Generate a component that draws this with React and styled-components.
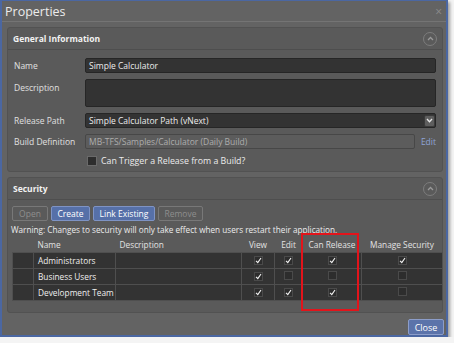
import React from 'react';
import styled, { createGlobalStyle } from 'styled-components';

const GlobalStyle = createGlobalStyle`
  body {
    margin: 0;
    background: #f4f4f4;
    font-family: "Open Sans", "Noto Sans", sans-serif;
  }
`;

const Window = styled.div`
  width: 448px;
  height: 337px;
  box-sizing: border-box;
  border: 2px solid #4b67a2;
  border-top-width: 1px;
  background: #636363;
  box-shadow: 2px 2px 3px rgba(0, 0, 0, 0.35);
  display: flex;
  flex-direction: column;
  color: #e6e6e6;
  font-size: 8.5px;
`;

const TitleBar = styled.div`
  height: 20px;
  padding: 0 4px 0 3px;
  display: flex;
  align-items: center;
  justify-content: space-between;
  border-bottom: 1px solid #747474;
  h1 {
    margin: 0;
    font-size: 12.5px;
    font-weight: 400;
    color: #ececec;
  }
  span {
    color: #8c8c8c;
    font-size: 12px;
  }
`;

const Body = styled.div`
  flex: 1;
  padding: 5px 3px 0 5px;
  display: flex;
  flex-direction: column;
  gap: 5px;
`;

const Panel = styled.section`
  height: ${p => p.$h}px;
  box-sizing: border-box;
  background: #5a5a5a;
  border: 1px solid #525252;
  border-radius: 3px;
  display: flex;
  flex-direction: column;
`;

const PanelHeader = styled.div`
  height: 21px;
  flex: none;
  padding: 0 5px;
  display: flex;
  align-items: center;
  justify-content: space-between;
  border-bottom: 1px solid #4e4e4e;
  font-weight: 700;
  font-size: 8.5px;
  color: #f2f2f2;
`;

const Collapse = styled.div`
  width: 12px;
  height: 12px;
  border-radius: 50%;
  border: 1px solid #7d7d7d;
  display: flex;
  align-items: center;
  justify-content: center;
  margin-right: 0;
`;

const Form = styled.div`
  padding: 8px 6px 0 6px;
  display: grid;
  grid-template-columns: 71px 1fr;
  row-gap: 6px;
  align-items: center;
`;

const Label = styled.div`
  align-self: ${p => (p.$top ? 'start' : 'center')};
  padding-top: ${p => (p.$top ? '3px' : '0')};
  color: #e0e0e0;
  white-space: nowrap;
`;

const Input = styled.div`
  height: ${p => p.$h || 15}px;
  box-sizing: border-box;
  flex: 1;
  background: ${p => (p.$disabled ? '#5c5c5c' : '#333333')};
  border: 1px solid ${p => (p.$disabled ? '#474747' : '#262626')};
  border-radius: 2px;
  padding: 0 3px;
  display: flex;
  align-items: center;
  justify-content: space-between;
  color: ${p => (p.$disabled ? '#adadad' : '#ececec')};
  white-space: nowrap;
`;

const DropButton = styled.div`
  width: 11px;
  height: 12px;
  margin-right: -3px;
  box-sizing: border-box;
  background: #5e5e5e;
  border: 1px solid #3a3a3a;
  border-radius: 2px;
  display: flex;
  align-items: center;
  justify-content: center;
`;

const Row = styled.div`
  display: flex;
  align-items: center;
  gap: 6px;
`;

const Link = styled.span`
  color: #8ea3d6;
`;

const CheckRow = styled.label`
  grid-column: 2;
  display: flex;
  align-items: center;
  gap: 4px;
  padding-left: 2px;
  font-size: 8.8px;
  color: #ececec;
`;

const Box = styled.span`
  width: ${p => (p.$big ? 10 : 9)}px;
  height: ${p => (p.$big ? 10 : 9)}px;
  box-sizing: border-box;
  background: #2d2d2d;
  border: 1px solid ${p => (p.$big ? '#6a6a6a' : '#4a4a4a')};
  display: inline-flex;
  align-items: center;
  justify-content: center;
`;

const SecurityBody = styled.div`
  padding: 6px 3px 0 3px;
  display: flex;
  flex-direction: column;
`;

const Toolbar = styled.div`
  display: flex;
  gap: 3px;
  padding-left: 1px;
`;

const Button = styled.button`
  height: 15px;
  width: ${p => p.$w}px;
  padding: 0;
  font-family: inherit;
  font-size: 8.5px;
  border-radius: 2px;
  border: 1px solid ${p => (p.$primary ? '#7e93c4' : '#787878')};
  background: ${p => (p.$primary ? '#5670a8' : 'transparent')};
  color: ${p => (p.$primary ? '#ffffff' : '#8e8e8e')};
`;

const Warning = styled.div`
  margin-top: 3px;
  font-size: 8.2px;
  color: #ececec;
  white-space: nowrap;
`;

const TableWrap = styled.div`
  position: relative;
  margin: 1px 0 0 1px;
`;

const Table = styled.table`
  border-collapse: collapse;
  table-layout: fixed;
  width: 430px;
  font-size: 8.3px;
  th {
    height: 16px;
    padding: 0;
    font-weight: 400;
    color: #e2e2e2;
    text-align: center;
    white-space: nowrap;
  }
  td {
    height: 15px;
    padding: 0;
    background: #333333;
    border: 1px solid #4f4f4f;
    text-align: center;
    color: #efefef;
    white-space: nowrap;
    overflow: hidden;
  }
  .left {
    text-align: left;
    padding-left: 4px;
  }
`;

const Highlight = styled.div`
  position: absolute;
  left: 289px;
  top: -3px;
  width: 58px;
  height: 78px;
  box-sizing: border-box;
  border: 2px solid #e3141b;
  pointer-events: none;
`;

const Footer = styled.div`
  display: flex;
  justify-content: flex-end;
  padding: 3px 2px 0 0;
`;

const CloseButton = styled(Button)`
  width: 36px;
  height: 16px;
  font-size: 9px;
  border-color: #8c9dc9;
  background: #5b73aa;
`;

const Tick = () => (
  <svg width="7" height="7" viewBox="0 0 7 7">
    <path d="M1 3.8 L2.8 5.6 L6 1" fill="none" stroke="#f4f4f4" strokeWidth="1.1" />
  </svg>
);

const Check = ({ on }) => (
  <Box>{on && <Tick />}</Box>
);

const rows = [
  { name: 'Administrators', perms: [true, true, true, true] },
  { name: 'Business Users', perms: [true, false, false, false] },
  { name: 'Development Team', perms: [true, true, true, false] },
];

const Chevron = ({ up }) => (
  <svg width="7" height="5" viewBox="0 0 7 5">
    <path
      d={up ? 'M1 4 L3.5 1.5 L6 4' : 'M1 1 L3.5 3.8 L6 1'}
      fill="none"
      stroke={up ? '#9a9a9a' : '#e8e8e8'}
      strokeWidth="1.3"
    />
  </svg>
);

export default function App() {
  return (
    <>
      <GlobalStyle />
      <Window>
        <TitleBar>
          <h1>Properties</h1>
          <span>×</span>
        </TitleBar>
        <Body>
          <Panel $h={145}>
            <PanelHeader>
              General Information
              <Collapse><Chevron up /></Collapse>
            </PanelHeader>
            <Form>
              <Label>Name</Label>
              <Input>Simple Calculator</Input>
              <Label $top>Description</Label>
              <Input $h={28} />
              <Label>Release Path</Label>
              <Input>
                Simple Calculator Path (vNext)
                <DropButton><Chevron /></DropButton>
              </Input>
              <Label>Build Definition</Label>
              <Row>
                <Input $disabled>MB-TFS/Samples/Calculator (Daily Build)</Input>
                <Link>Edit</Link>
              </Row>
              <CheckRow>
                <Box $big />
                Can Trigger a Release from a Build?
              </CheckRow>
            </Form>
          </Panel>
          <Panel $h={136}>
            <PanelHeader>
              Security
              <Collapse><Chevron up /></Collapse>
            </PanelHeader>
            <SecurityBody>
              <Toolbar>
                <Button $w={36}>Open</Button>
                <Button $w={39} $primary>Create</Button>
                <Button $w={62} $primary>Link Existing</Button>
                <Button $w={45}>Remove</Button>
              </Toolbar>
              <Warning>
                Warning: Changes to security will only take effect when users restart their application.
              </Warning>
              <TableWrap>
                <Table>
                  <colgroup>
                    <col style={{ width: 21 }} />
                    <col style={{ width: 82 }} />
                    <col style={{ width: 126 }} />
                    <col style={{ width: 33 }} />
                    <col style={{ width: 28 }} />
                    <col style={{ width: 59 }} />
                    <col style={{ width: 81 }} />
                  </colgroup>
                  <thead>
                    <tr>
                      <th />
                      <th className="left">Name</th>
                      <th className="left">Description</th>
                      <th>View</th>
                      <th>Edit</th>
                      <th>Can Release</th>
                      <th>Manage Security</th>
                    </tr>
                  </thead>
                  <tbody>
                    {rows.map(r => (
                      <tr key={r.name}>
                        <td />
                        <td className="left">{r.name}</td>
                        <td />
                        {r.perms.map((p, i) => (
                          <td key={i}><Check on={p} /></td>
                        ))}
                      </tr>
                    ))}
                  </tbody>
                </Table>
                <Highlight />
              </TableWrap>
            </SecurityBody>
          </Panel>
        </Body>
        <Footer>
          <CloseButton $primary>Close</CloseButton>
        </Footer>
      </Window>
    </>
  );
}
